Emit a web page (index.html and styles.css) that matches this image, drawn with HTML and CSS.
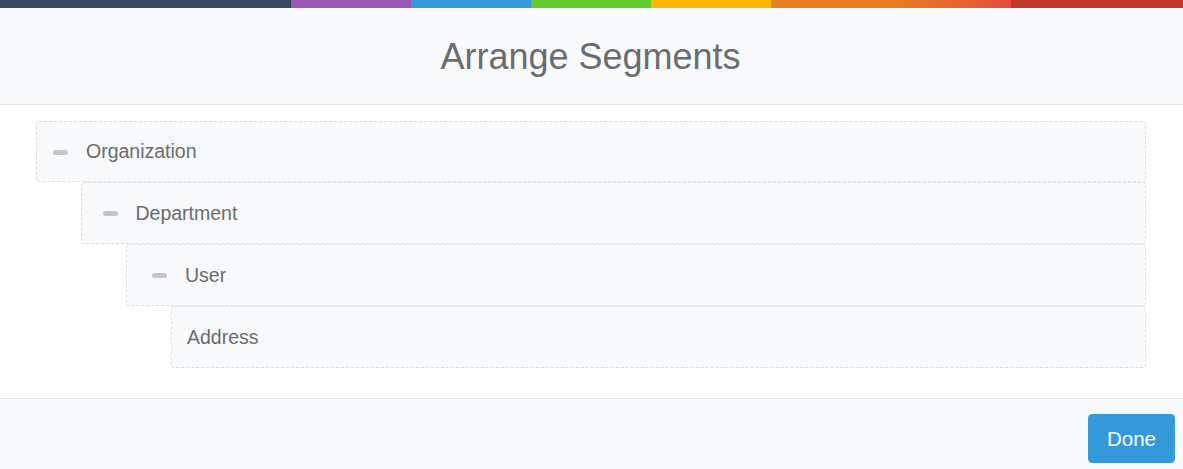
FILE: index.html
```html
<!DOCTYPE html>
<html>
<head>
<meta charset="utf-8">
<link rel="stylesheet" href="styles.css">
</head>
<body>
<div class="modal">
  <div class="color-line">
    <span class="c1"></span><span class="c2"></span><span class="c3"></span><span class="c4"></span><span class="c5"></span><span class="c6"></span><span class="c7"></span>
  </div>
  <div class="modal-header">
    <h4 class="modal-title">Arrange Segments</h4>
  </div>
  <div class="modal-body">
    <ol class="tree">
      <li>
        <div class="item lvl1"><span class="handle"></span><span class="label">Organization</span></div>
        <ol class="tree nested">
          <li>
            <div class="item lvl2"><span class="handle"></span><span class="label">Department</span></div>
            <ol class="tree nested">
              <li>
                <div class="item lvl3"><span class="handle"></span><span class="label">User</span></div>
                <ol class="tree nested">
                  <li>
                    <div class="item leaf"><span class="label">Address</span></div>
                  </li>
                </ol>
              </li>
            </ol>
          </li>
        </ol>
      </li>
    </ol>
  </div>
  <div class="modal-footer">
    <button class="btn-done">Done</button>
  </div>
</div>
</body>
</html>
```

FILE: styles.css
```css
html, body {
  margin: 0;
  padding: 0;
  background: #ffffff;
}
body {
  font-family: "Liberation Sans", Arial, Helvetica, sans-serif;
  color: #6a6c6f;
}
.modal {
  width: 1183px;
  height: 469px;
  overflow: hidden;
  display: flex;
  flex-direction: column;
}
.color-line {
  display: flex;
  height: 8px;
  flex: 0 0 8px;
}
.color-line span { display: block; height: 8px; }
.c1 { width: 291px; background: #34495e; }
.c2 { width: 120px; background: #9b59b6; }
.c3 { width: 120px; background: #3498db; }
.c4 { width: 120px; background: #62cb31; }
.c5 { width: 120px; background: #ffb606; }
.c6 { width: 240px; background: linear-gradient(to right, #e67e22 0%, #e67e22 50%, #e74c3c 100%); }
.c7 { flex: 1; background: #c0392b; }

.modal-header {
  height: 96px;
  flex: 0 0 96px;
  background: #f7f9fa;
  border-bottom: 1px solid #e4e5e7;
  display: flex;
  align-items: center;
  justify-content: center;
}
.modal-title {
  margin: 0;
  font-size: 36px;
  font-weight: 400;
  color: #6a6c6f;
  line-height: 1;
  padding-top: 2px;
  padding-right: 2px;
}
.modal-body {
  height: 293px;
  flex: 0 0 293px;
  padding: 16px 37px 0 36px;
  box-sizing: border-box;
}
.tree {
  list-style: none;
  margin: 0;
  padding: 0;
}
.tree.nested {
  margin-left: 45px;
}
.item {
  height: 62px;
  box-sizing: border-box;
  background: #f7f9fa;
  border: 1px dashed #dfe1e4;
  border-radius: 3px;
  display: flex;
  align-items: center;
}
.lvl1 { padding-left: 16px; height: 61px; }
.lvl2 { padding-left: 20.5px; }
.lvl3 { padding-left: 25px; }
.leaf { padding-left: 15px; }
.handle {
  display: block;
  width: 15px;
  height: 5px;
  border-radius: 3px;
  background: #c4c5c7;
  margin-right: 18px;
  margin-top: 1px;
}
.label {
  font-size: 19.5px;
  color: #6a6c6f;
}
.modal-footer {
  flex: 1;
  background: #f7f9fa;
  border-top: 1px solid #e4e5e7;
  display: flex;
  justify-content: flex-end;
  align-items: flex-start;
  padding: 15px 8px 0 0;
}
.btn-done {
  width: 87px;
  height: 49px;
  background: #3498db;
  border: 1px solid #3498db;
  border-radius: 4px;
  color: #ffffff;
  font-family: "Liberation Sans", Arial, Helvetica, sans-serif;
  font-size: 20.5px;
  padding: 0;
}
```
